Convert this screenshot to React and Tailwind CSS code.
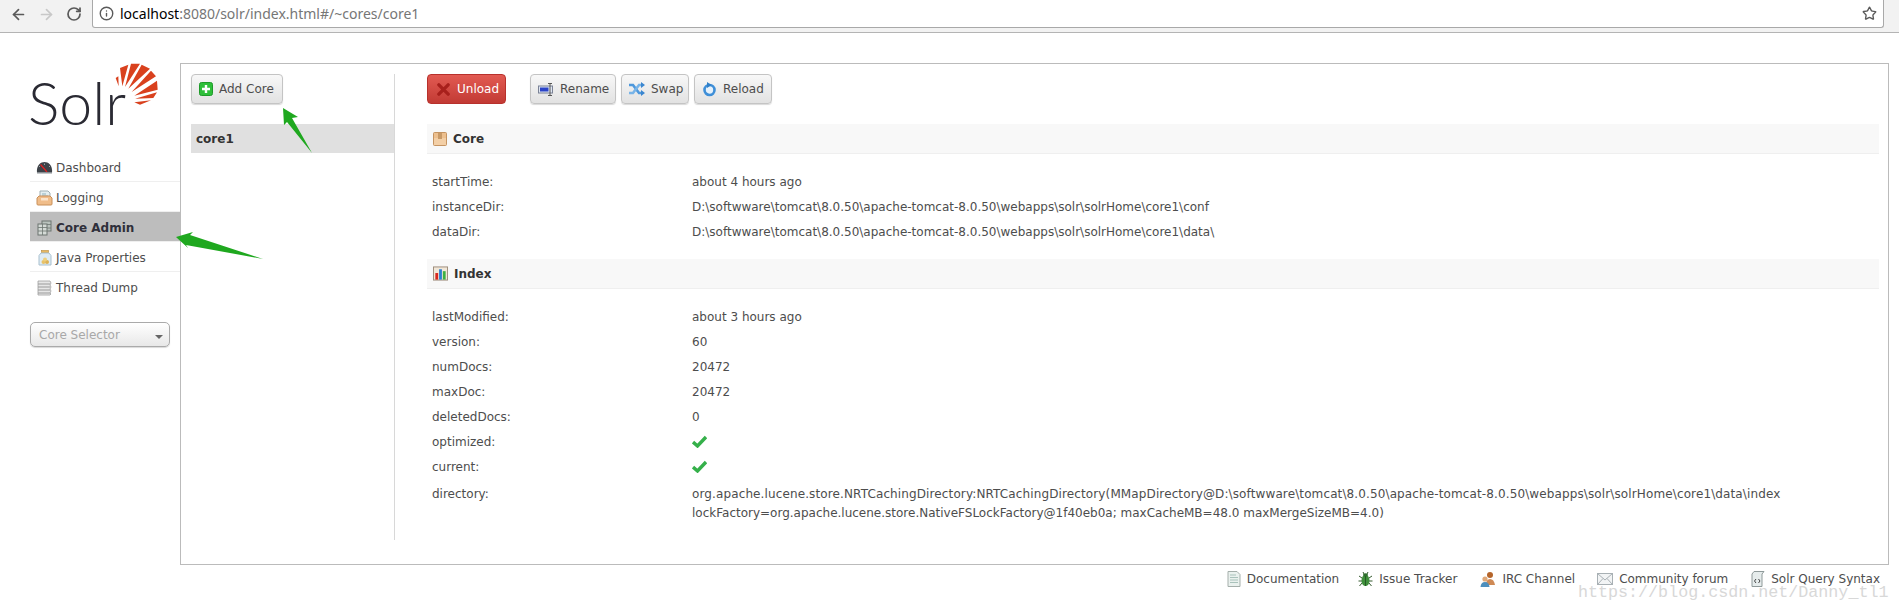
import { ArrowLeft, ArrowRight, RotateCw, Info, Star } from 'lucide-react';

const font = "[font-family:'DejaVu_Sans',Verdana,sans-serif]";

const GaugeIcon = () => (
	<svg width="17" height="13" viewBox="0 0 17 13">
		<path d="M1 12 C0 4 5 1 8.5 1 C12 1 17 4 16 12 Z" fill="#3d4248" />
		<path d="M3 5 L4 6 M8.5 2.5 V4 M14 5 L13 6" stroke="#9aa0a6" />
		<path d="M4.5 3.5 L11 11" stroke="#e02020" strokeWidth="1.2" />
		<rect x="1" y="11" width="15" height="1.5" fill="#8a8f94" />
	</svg>
);

const LoggingIcon = () => (
	<svg width="17" height="16" viewBox="0 0 17 16">
		<path d="M4 1 H12 L14 3 V9 H4 Z" fill="#e4eef0" stroke="#9fb0b4" />
		<path d="M6 4 H10 M6 6 H12" stroke="#8fb3bd" />
		<path d="M1 8 L3 6 H14 L16 8 V14 Q16 15 15 15 H2 Q1 15 1 14 Z" fill="#f0bd8a" stroke="#c98f58" />
		<rect x="5" y="8" width="7" height="2.5" fill="#fbe3c9" />
	</svg>
);

const CoreIcon = () => (
	<svg width="15" height="16" viewBox="0 0 15 16">
		<rect x="5" y="1" width="9" height="10" fill="#b9c2bd" stroke="#6c7570" />
		<rect x="1" y="4" width="9" height="11" fill="#d4dad6" stroke="#6c7570" />
		<path d="M1 7.5 H10 M1 11 H10 M5.5 4 V15 M10 4.5 H14 M10 8 H14" stroke="#6c7570" strokeWidth="0.8" />
	</svg>
);

const JarIcon = () => (
	<svg width="14" height="16" viewBox="0 0 14 16">
		<rect x="3.5" y="0.5" width="7" height="2.5" fill="#e8b860" stroke="#b98a3a" strokeWidth="0.6" />
		<path d="M3 3 H11 L13 5.5 V15 H1 V5.5 Z" fill="#dfecf4" stroke="#a9c0cf" />
		<circle cx="5.5" cy="12" r="2" fill="#e8c268" />
		<circle cx="9" cy="12" r="2" fill="#ddb255" />
		<circle cx="7" cy="9.5" r="2" fill="#efcf7c" />
	</svg>
);

const StackIcon = () => (
	<svg width="15" height="16" viewBox="0 0 15 16">
		<path d="M1 1 H13 L14 3 L13 5 L14 7 L13 9 L14 11 L13 13 L14 14 L13 15 H1 Z" fill="#e6e6e6" stroke="#a0a0a0" strokeWidth="0.8" />
		<path d="M1 4 H13 M1 7 H13 M1 10 H13 M1 13 H13" stroke="#9a9a9a" />
	</svg>
);

const PlusIcon = () => (
	<svg width="14" height="14" viewBox="0 0 14 14">
		<rect x="0.5" y="0.5" width="13" height="13" rx="2" fill="#2fbf3a" stroke="#1f9a2a" />
		<path d="M7 3 V11 M3 7 H11" stroke="#fff" strokeWidth="2.4" />
	</svg>
);

const CrossIcon = () => (
	<svg width="13" height="13" viewBox="0 0 14 14">
		<path d="M2 2 L12 12 M12 2 L2 12" stroke="#a8201c" strokeWidth="3.6" strokeLinecap="round" />
	</svg>
);

const RenameIcon = () => (
	<svg width="16" height="13" viewBox="0 0 16 13">
		<rect x="0.5" y="3" width="14" height="7" fill="#dfe6f2" stroke="#7a8296" />
		<rect x="2" y="4.5" width="8.5" height="4" fill="#2b44c8" />
		<path d="M10 0.5 H14 M12 0.5 V12.5 M10 12.5 H14" stroke="#555" />
	</svg>
);

const SwapIcon = () => (
	<svg width="16" height="14" viewBox="0 0 16 14">
		<path d="M0 3 H4 L10 11 H13" stroke="#4e98dc" strokeWidth="2.6" fill="none" />
		<path d="M0 11 H4 L10 3 H13" stroke="#78b4e8" strokeWidth="2.6" fill="none" />
		<path d="M12 0 L16 3 L12 6 Z M12 8 L16 11 L12 14 Z" fill="#3a86d0" />
	</svg>
);

const ReloadIcon = () => (
	<svg width="15" height="15" viewBox="0 0 15 15">
		<circle cx="7.5" cy="8" r="5" fill="#e6f1fb" stroke="#3f8fd8" strokeWidth="2.6" />
		<path d="M5 0 L9.5 3 L5 6 Z" fill="#2f7fc8" />
	</svg>
);

const BoxIcon = () => (
	<svg width="14" height="14" viewBox="0 0 14 14">
		<rect x="0.5" y="0.5" width="13" height="13" rx="1" fill="#edc08f" stroke="#c59462" />
		<rect x="1" y="6" width="12" height="7" fill="#f3cfa6" />
		<rect x="5" y="1" width="4" height="6" fill="#c89a68" />
	</svg>
);

const ChartIcon = () => (
	<svg width="15" height="15" viewBox="0 0 16 15">
		<rect x="0.5" y="0.5" width="15" height="14" fill="#f1e7d8" stroke="#9a8a78" />
		<rect x="2.5" y="7" width="3" height="7" fill="#d8281f" />
		<rect x="6.5" y="3" width="3" height="11" fill="#2a7fd0" />
		<rect x="10.5" y="5" width="3" height="9" fill="#3db043" />
	</svg>
);

const CheckIcon = () => (
	<svg width="15" height="13" viewBox="0 0 15 13">
		<path d="M1 7 L5.5 11 L14 2" stroke="#35b04a" strokeWidth="3.4" fill="none" />
	</svg>
);

const DocIcon = () => (
	<svg width="14" height="16" viewBox="0 0 14 16">
		<path d="M1 0.5 H10 L13 3.5 V15.5 H1 Z" fill="#eaf1ee" stroke="#a5afab" />
		<path d="M3 4 H9 M3 6.5 H11 M3 9 H11 M3 11.5 H11" stroke="#a9c2bb" />
	</svg>
);

const BugIcon = () => (
	<svg width="15" height="16" viewBox="0 0 15 16">
		<path d="M1 5 L4 7 M14 5 L11 7 M0.5 10 H4 M14.5 10 H11 M1.5 15 L4 12 M13.5 15 L11 12 M5 1 L6 3 M10 1 L9 3" stroke="#355a2e" />
		<ellipse cx="7.5" cy="9.5" rx="4" ry="5.5" fill="#3f8f3c" />
		<ellipse cx="7.5" cy="4" rx="2.5" ry="1.8" fill="#2f6f2e" />
		<path d="M7.5 5 V15" stroke="#255a25" />
	</svg>
);

const PeopleIcon = () => (
	<svg width="16" height="16" viewBox="0 0 16 16">
		<circle cx="10" cy="4" r="3" fill="#b5652b" />
		<path d="M6 14 Q6 8 10 8 Q14 8 15 14 Z" fill="#cf8a55" />
		<circle cx="5" cy="8" r="2.6" fill="#e0a878" />
		<path d="M0.5 16 Q1 11 5 11 Q9 11 9.5 16 Z" fill="#4d8fbd" />
	</svg>
);

const MailIcon = () => (
	<svg width="16" height="12" viewBox="0 0 16 12">
		<rect x="0.5" y="0.5" width="15" height="11" fill="#f2f4f5" stroke="#a8b0b4" />
		<path d="M0.5 0.5 L8 7 L15.5 0.5 M0.5 11.5 L6 5.5 M15.5 11.5 L10 5.5" stroke="#a8b0b4" fill="none" />
	</svg>
);

const ScriptIcon = () => (
	<svg width="14" height="16" viewBox="0 0 14 16">
		<path d="M3 0.5 H13 L11 3 V15.5 H1 V3 Z" fill="#e6ecec" stroke="#8f9a9a" />
		<path d="M5 8 L3.5 10 L5 12 M7.5 8 L9 10 L7.5 12" stroke="#444" fill="none" />
	</svg>
);

const navItems = [
	{ label: 'Dashboard', icon: <GaugeIcon /> },
	{ label: 'Logging', icon: <LoggingIcon /> },
	{ label: 'Core Admin', icon: <CoreIcon />, active: true },
	{ label: 'Java Properties', icon: <JarIcon /> },
	{ label: 'Thread Dump', icon: <StackIcon /> },
];

const coreRows = [
	['startTime:', 'about 4 hours ago'],
	['instanceDir:', 'D:\\softwware\\tomcat\\8.0.50\\apache-tomcat-8.0.50\\webapps\\solr\\solrHome\\core1\\conf'],
	['dataDir:', 'D:\\softwware\\tomcat\\8.0.50\\apache-tomcat-8.0.50\\webapps\\solr\\solrHome\\core1\\data\\'],
];

const indexRows = [
	['lastModified:', 'about 3 hours ago'],
	['version:', '60'],
	['numDocs:', '20472'],
	['maxDoc:', '20472'],
	['deletedDocs:', '0'],
	['optimized:', <CheckIcon />],
	['current:', <CheckIcon />],
];

const footerLinks = [
	{ label: 'Documentation', icon: <DocIcon />, gap: 'mr-[19px]' },
	{ label: 'Issue Tracker', icon: <BugIcon />, gap: 'mr-[23px]' },
	{ label: 'IRC Channel', icon: <PeopleIcon />, gap: 'mr-[22px]' },
	{ label: 'Community forum', icon: <MailIcon />, gap: 'mr-[23px]' },
	{ label: 'Solr Query Syntax', icon: <ScriptIcon />, gap: '' },
];

const Button = ({ icon, label, className }) => (
	<button className={`flex h-[30px] items-center gap-[6px] rounded-[4px] border border-[#c4c4c4] bg-linear-to-b from-[#f8f8f8] to-[#e2e2e2] pl-[7px] whitespace-nowrap text-[#4d4d4d] shadow-[0_1px_1px_rgba(0,0,0,0.15)] ${className}`}>
		{icon}
		{label}
	</button>
);

const Section = ({ icon, title, rows, className }) => (
	<div className={className}>
		<div className="flex h-[30px] items-center gap-[6px] border-b border-[#efefef] bg-[#f8f8f8] pl-[6px] font-bold text-[#333]">
			{icon}
			{title}
		</div>
		<div className="mt-[15px] pl-[5px]">
			{rows.map(([name, value]) => (
				<div key={name} className="flex h-[25px] items-center">
					<div className="w-[260px] text-[#4d4d4d]">{name}</div>
					<div className="text-[#4d4d4d]">{value}</div>
				</div>
			))}
		</div>
	</div>
);

const App = () => {
	return (
		<div className={`relative h-[613px] w-[1899px] overflow-hidden bg-white text-[12px] ${font}`}>
			{/* browser toolbar */}
			<div className="flex h-[33px] items-start border-b border-[#b4b4b4] bg-[#f2f2f2]">
				<div className="flex h-[28px] w-[92px] items-center pl-[10px]">
					<ArrowLeft size={17} className="text-[#5a5a5a]" strokeWidth={2.4} />
					<ArrowRight size={17} className="ml-[11px] text-[#c8c8c8]" strokeWidth={2.4} />
					<RotateCw size={16} className="ml-[11px] text-[#5a5a5a]" strokeWidth={2.6} />
				</div>
				<div className="flex h-[28px] w-[1792px] items-center justify-between rounded-b-[3px] border border-t-0 border-[#a9a9a9] bg-white pl-[6px] pr-[6px] font-['Noto_Sans',sans-serif] text-[14px]">
					<div className="flex items-center gap-[6px]">
						<Info size={15} className="text-[#5a5a5a]" strokeWidth={2.2} />
						<div>
							<span className="text-black">localhost</span>
							<span className="text-[#767676]">:8080/solr/index.html#/~cores/core1</span>
						</div>
					</div>
					<Star size={15} className="text-[#5a5a5a]" strokeWidth={2.2} />
				</div>
			</div>

			<div className="mt-[30px] flex pl-[30px]">
				{/* sidebar */}
				<div className="w-[150px]">
					<div className="flex h-[89px] items-start">
						<div className="mt-[10px] -ml-[2px] w-[86px] whitespace-nowrap font-['Lato',sans-serif] text-[59px] leading-[59px] font-light text-[#2a2a33]">Solr</div>
						<svg width="45" height="45" viewBox="267 12 135 135" className="-mt-px shrink-0">
							<path d="M272 60 L280 55 L281 85 Z M285 30 L310 20 L292 85 Z M318 17 L345 17 L300 87 Z M350 20 L375 32 L310 92 Z M378 38 L393 55 L320 102 Z M396 68 L398 95 L328 113 Z M396 103 L385 120 L330 122 Z M378 127 L345 140 L328 133 Z" fill="#d9411e" />
						</svg>
					</div>
					<div>
						{navItems.map((item) => (
							<div
								key={item.label}
								className={`flex h-[30px] items-center border-b border-[#efefef] pt-[2px] last:border-b-0 ${item.active ? 'bg-[#bdbdbd] font-bold text-[#2f2f3a]' : 'text-[#4d4d4d]'}`}
							>
								<div className="flex w-[26px] justify-center pl-[3px]">{item.icon}</div>
								{item.label}
							</div>
						))}
					</div>
					<div className="relative mt-[20px] flex h-[25px] w-[140px] items-center rounded-[5px] border border-[#aaa] bg-linear-to-b from-white to-[#e8e8e8] pl-[8px] text-[#a8a8a8] shadow-[0_1px_1px_rgba(0,0,0,0.15)]">
						Core Selector
						<div className="absolute top-[12px] right-[6px] border-x-[4px] border-t-[4px] border-x-transparent border-t-[#666]"></div>
					</div>
				</div>

				{/* main panel */}
				<div className="flex h-[502px] w-[1709px] border border-[#bbb] pt-[10px] pl-[10px]">
					<div className="h-[466px] w-[204px] border-r border-[#d8d8d8]">
						<Button icon={<PlusIcon />} label="Add Core" className="w-[92px]" />
						<div className="mt-[20px] flex h-[29px] items-center bg-[#e0e0e0] pl-[5px] font-bold text-[#333]">core1</div>
					</div>
					<div className="ml-[32px] w-[1452px]">
						<div className="flex">
							<button className="flex h-[30px] w-[79px] items-center gap-[7px] rounded-[4px] border border-[#b8312c] bg-linear-to-b from-[#e25a52] to-[#c23a34] pl-[9px] text-white">
								<CrossIcon />
								Unload
							</button>
							<Button icon={<RenameIcon />} label="Rename" className="ml-[24px] w-[86px]" />
							<Button icon={<SwapIcon />} label="Swap" className="ml-[5px] w-[68px]" />
							<Button icon={<ReloadIcon />} label="Reload" className="ml-[5px] w-[78px]" />
						</div>
						<Section icon={<BoxIcon />} title="Core" rows={coreRows} className="mt-[20px]" />
						<Section icon={<ChartIcon />} title="Index" rows={indexRows} className="mt-[15px]" />
						<div className="flex pl-[5px] pt-[6px] leading-[19px] text-[#4d4d4d]">
							<div className="w-[260px]">directory:</div>
							<div className="whitespace-nowrap">
								<div className="tracking-[0.12px]">org.apache.lucene.store.NRTCachingDirectory:NRTCachingDirectory(MMapDirectory@D:\softwware\tomcat\8.0.50\apache-tomcat-8.0.50\webapps\solr\solrHome\core1\data\index</div>
								<div>lockFactory=org.apache.lucene.store.NativeFSLockFactory@1f40eb0a; maxCacheMB=48.0 maxMergeSizeMB=4.0)</div>
							</div>
						</div>
					</div>
				</div>
			</div>

			{/* footer links */}
			<div className="mt-[6px] flex h-[16px] items-center justify-end pr-[19px] text-[#4d4d4d]">
				{footerLinks.map((link) => (
					<div key={link.label} className={`flex items-center gap-[6px] ${link.gap}`}>
						{link.icon}
						{link.label}
					</div>
				))}
			</div>

			{/* csdn watermark */}
			<div className="absolute top-[583px] left-[1578px] font-['Liberation_Mono',monospace] text-[16.7px] leading-[20px] whitespace-nowrap text-[#d8d8d8]">
				https://blog.csdn.net/Danny_tl1
			</div>

			{/* green arrows drawn on the screenshot */}
			<svg className="pointer-events-none absolute top-0 left-0" width="1899" height="613">
				<path d="M283 108 L298 117 L292 118 L312 153 L287 122 L284 125 Z" fill="#1fa81f" />
				<path d="M176 237 L193 232 L190 235 L263 259 L186 245 L188 248 Z" fill="#1fa81f" />
			</svg>
		</div>
	);
};

export default App;
